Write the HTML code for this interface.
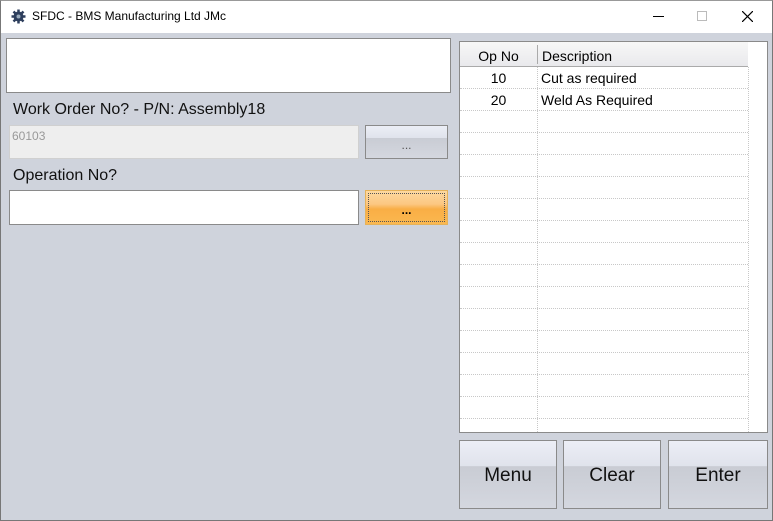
<!DOCTYPE html>
<html><head><style>
*{margin:0;padding:0;box-sizing:border-box}
body{width:773px;height:521px;overflow:hidden;background:#cfd3dc;font-family:"Liberation Sans",sans-serif;position:relative}
.win{position:absolute;left:0;top:0;width:773px;height:521px;border:1px solid #777;border-top-color:#999}
.title{position:absolute;left:0;top:0;width:772px;height:33px;background:#fff;font-size:12px;color:#000}
.abs{position:absolute}
.lbl{font-size:16px;color:#111}
.box{background:#fff;border:1px solid #8a8a8a}
.btn{border:1px solid #8a8a8a;background:linear-gradient(#eceef6 0%,#e0e3ec 37%,#c9ccd4 38%,#d4d7df 100%);text-align:center;color:#111}
.grid{left:459px;top:41px;width:309px;height:392px;background:#fff;border:1px solid #8a8a8a}
.row{position:absolute;left:0;width:288px;height:22px;border-bottom:1px dotted #c8c8c8;font-size:14px}
.row .c1{position:absolute;left:0;width:77px;text-align:center;top:3px}
.row .c2{position:absolute;left:81px;top:3px}
</style></head><body>
<div class="title">
<svg class="abs" style="left:11px;top:9px" width="15" height="15" viewBox="0 0 15 15"><circle cx="7.5" cy="7.5" r="5" fill="#2d3e5c"/><g stroke="#2d3e5c" stroke-width="2.5"><line x1="7.5" y1="0.5" x2="7.5" y2="14.5"/><line x1="0.5" y1="7.5" x2="14.5" y2="7.5"/><line x1="2.5" y1="2.5" x2="12.5" y2="12.5"/><line x1="12.5" y1="2.5" x2="2.5" y2="12.5"/></g><circle cx="7.5" cy="7.5" r="2" fill="#9ab"/></svg>
<div class="abs" style="left:32px;top:9px">SFDC - BMS Manufacturing Ltd JMc</div>
<div class="abs" style="left:653px;top:16px;width:11px;height:1px;background:#000"></div>
<div class="abs" style="left:697px;top:11px;width:10px;height:10px;border:1px solid #bbb"></div>
<svg class="abs" style="left:742px;top:11px" width="11" height="11"><path d="M0 0L11 11M11 0L0 11" stroke="#000" stroke-width="1.2"/></svg>
</div>
<div class="win"></div>
<div class="abs box" style="left:6px;top:38px;width:445px;height:55px"></div>
<div class="abs lbl" style="left:13px;top:101px">Work Order No? - P/N: Assembly18</div>
<div class="abs" style="left:9px;top:125px;width:350px;height:34px;background:#eeeeee;border:1px solid #d0d0d0;font-size:12px;color:#999;padding:3px 2px">60103</div>
<div class="abs btn" style="left:365px;top:125px;width:83px;height:34px;font-size:12px;line-height:38px;color:#555">...</div>
<div class="abs lbl" style="left:13px;top:167px">Operation No?</div>
<div class="abs box" style="left:9px;top:190px;width:350px;height:35px"></div>
<div class="abs" style="left:365px;top:190px;width:83px;height:35px;border:1px solid #e5b25a;background:linear-gradient(#fdd9a0 0%,#fcc781 40%,#f9ae45 55%,#fbb850 100%);text-align:center;font-size:12px;line-height:38px;font-weight:bold"><div style="position:absolute;left:2px;top:2px;right:2px;bottom:2px;border:1px dotted #555"></div>...</div>
<div class="abs grid">
<div class="abs" style="left:0;top:0;width:288px;height:25px;background:linear-gradient(#f7f7f7,#e9e9ec);border-bottom:1px solid #aaa;font-size:14px">
<div class="abs" style="left:0;width:77px;text-align:center;top:6px">Op No</div>
<div class="abs" style="left:77px;top:3px;height:19px;width:1px;background:#aaa"></div>
<div class="abs" style="left:82px;top:6px">Description</div>
</div>
<div class="row" style="top:25px"><span class="c1">10</span><span class="c2">Cut as required</span></div>
<div class="row" style="top:47px"><span class="c1">20</span><span class="c2">Weld As Required</span></div>
<div class="row" style="top:69px"></div><div class="row" style="top:91px"></div><div class="row" style="top:113px"></div><div class="row" style="top:135px"></div><div class="row" style="top:157px"></div><div class="row" style="top:179px"></div><div class="row" style="top:201px"></div><div class="row" style="top:223px"></div><div class="row" style="top:245px"></div><div class="row" style="top:267px"></div><div class="row" style="top:289px"></div><div class="row" style="top:311px"></div><div class="row" style="top:333px"></div><div class="row" style="top:355px"></div>
<div class="abs" style="left:77px;top:25px;height:365px;border-left:1px dotted #c8c8c8"></div>
<div class="abs" style="left:288px;top:25px;height:365px;border-left:1px dotted #c8c8c8"></div>
</div>
<div class="abs btn" style="left:459px;top:440px;width:98px;height:69px;font-size:19px;line-height:70px">Menu</div>
<div class="abs btn" style="left:563px;top:440px;width:98px;height:69px;font-size:19px;line-height:70px">Clear</div>
<div class="abs btn" style="left:668px;top:440px;width:100px;height:69px;font-size:19px;line-height:70px">Enter</div>
</body></html>
